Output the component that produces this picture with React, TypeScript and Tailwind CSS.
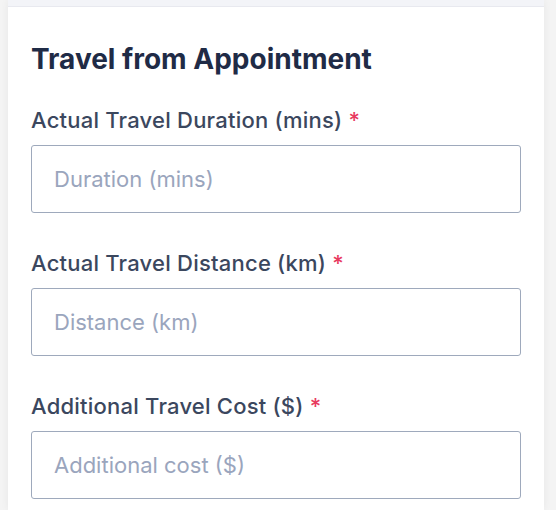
import React from 'react';

const fields = [
  { label: 'Actual Travel Duration (mins)', placeholder: 'Duration (mins)' },
  { label: 'Actual Travel Distance (km)', placeholder: 'Distance (km)' },
  { label: 'Additional Travel Cost ($)', placeholder: 'Additional cost ($)' },
];

export default function App() {
  return (
    <div
      className="min-h-[510px] w-[556px] bg-[#f4f4f4] pl-[8px] pr-[12px]"
      style={{ fontFamily: 'Inter, "Noto Sans", sans-serif' }}
    >
      <div className="min-h-[510px] bg-white shadow-[0_0_8px_rgba(0,0,0,0.06)]">
        <div className="h-[7px] bg-[#f3f4f8] border-b border-[#e8e9ef]" />
        <div className="px-[23px] pt-[34px]">
          <h2 className="text-[28px] leading-[36px] font-bold text-[#1f2b46]">
            Travel from Appointment
          </h2>
          <div className="mt-[29px] flex flex-col gap-[36px]">
            {fields.map((f) => (
              <div key={f.label} className="flex flex-col gap-[11px]">
                <label className="text-[22px] leading-[28px] font-medium text-[#3b475e] tracking-[0.01em]">
                  {f.label} <span className="text-[#e83a5f]">*</span>
                </label>
                <input
                  placeholder={f.placeholder}
                  className="h-[68px] w-full rounded-[3px] border border-[#9ea9bc] bg-white px-[22px] text-[22px] text-[#1f2b46] outline-none placeholder:text-[#9aa5bd]"
                />
              </div>
            ))}
          </div>
        </div>
      </div>
    </div>
  );
}
